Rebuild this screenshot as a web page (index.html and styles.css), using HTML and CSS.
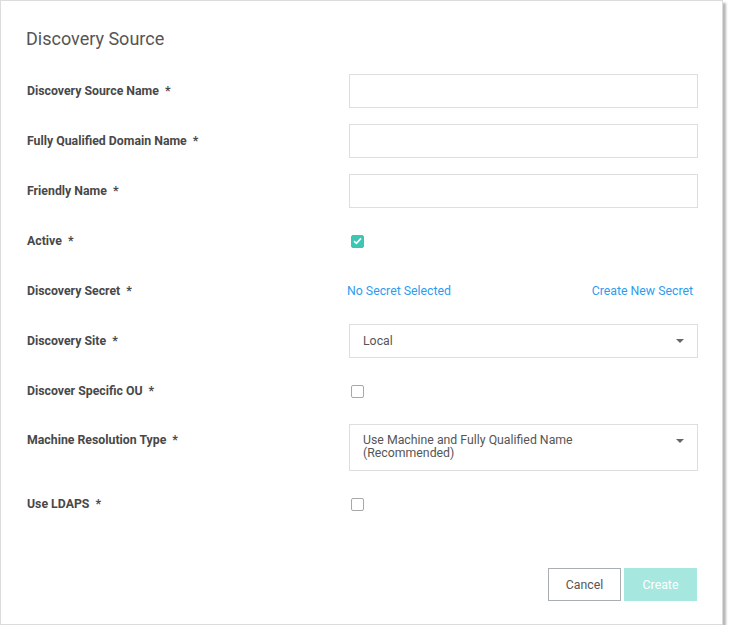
FILE: index.html
```html
<!DOCTYPE html>
<html>
<head>
<meta charset="utf-8">
<link rel="stylesheet" href="styles.css">
</head>
<body>
<div class="dialog">
  <h1 class="title">Discovery Source</h1>
  <div class="form">
    <div class="row">
      <label class="label">Discovery Source Name <span class="req">*</span></label>
      <div class="control"><div class="input"></div></div>
    </div>
    <div class="row">
      <label class="label">Fully Qualified Domain Name <span class="req">*</span></label>
      <div class="control"><div class="input"></div></div>
    </div>
    <div class="row">
      <label class="label">Friendly Name <span class="req">*</span></label>
      <div class="control"><div class="input"></div></div>
    </div>
    <div class="row">
      <label class="label">Active <span class="req">*</span></label>
      <div class="control">
        <span class="checkbox checked">
          <svg width="9" height="8" viewBox="0 0 9 8"><path d="M1 4.2 L3.4 6.4 L8 1.4" fill="none" stroke="#fff" stroke-width="1.6"/></svg>
        </span>
      </div>
    </div>
    <div class="row">
      <label class="label">Discovery Secret <span class="req">*</span></label>
      <div class="control links">
        <a class="link">No Secret Selected</a>
        <a class="link">Create New Secret</a>
      </div>
    </div>
    <div class="row">
      <label class="label">Discovery Site <span class="req">*</span></label>
      <div class="control"><div class="select"><span class="select-text">Local</span><span class="caret"></span></div></div>
    </div>
    <div class="row">
      <label class="label">Discover Specific OU <span class="req">*</span></label>
      <div class="control"><span class="checkbox"></span></div>
    </div>
    <div class="row row-top">
      <label class="label">Machine Resolution Type <span class="req">*</span></label>
      <div class="control"><div class="select tall"><span class="select-text">Use Machine and Fully Qualified Name<br>(Recommended)</span><span class="caret"></span></div></div>
    </div>
    <div class="row">
      <label class="label">Use LDAPS <span class="req">*</span></label>
      <div class="control"><span class="checkbox"></span></div>
    </div>
  </div>
  <div class="actions">
    <button class="btn btn-cancel">Cancel</button>
    <button class="btn btn-create">Create</button>
  </div>
</div>
</body>
</html>
```
FILE: styles.css
```css
html, body {
  margin: 0;
  padding: 0;
  background: #fff;
}
body {
  font-family: Roboto, "Liberation Sans", Arial, sans-serif;
}
.dialog {
  box-sizing: border-box;
  width: 723px;
  height: 625px;
  border: 1px solid #dcdcdc;
  box-shadow: 3px 3px 2px rgba(0,0,0,0.28);
  background: #fff;
  padding: 27px 25px 0 25px;
  display: flex;
  flex-direction: column;
}
.title {
  margin: 0;
  font-size: 18px;
  font-weight: 400;
  line-height: 21px;
  color: #555;
}
.form {
  margin-top: 25px;
  display: flex;
  flex-direction: column;
  gap: 16px;
}
.row {
  display: grid;
  grid-template-columns: 323px 349px;
  align-items: center;
  min-height: 34px;
}
.row-top {
  align-items: start;
}
.row-top .label {
  padding-top: 9px;
}
.label {
  font-size: 12.3px;
  font-weight: 700;
  color: #484848;
  padding-left: 1px;
}
.req {
  margin-left: 3px;
}
.control {
  display: flex;
  align-items: center;
}
.input {
  box-sizing: border-box;
  width: 349px;
  height: 34px;
  border: 1px solid #dedede;
}
.checkbox {
  box-sizing: border-box;
  width: 13px;
  height: 13px;
  margin-left: 2px;
  border: 1px solid #a8a8a8;
  border-radius: 2px;
  display: flex;
  align-items: center;
  justify-content: center;
}
.checkbox.checked {
  background: #3cc7b4;
  border-color: #3cc7b4;
}
.links {
  justify-content: space-between;
  padding-right: 5px;
  margin-left: -2px;
}
.link {
  font-size: 12.3px;
  color: #2d9cf0;
}
.select {
  box-sizing: border-box;
  width: 349px;
  height: 34px;
  border: 1px solid #dedede;
  display: flex;
  align-items: center;
  justify-content: space-between;
  padding: 0 13px 0 13px;
  color: #555;
  font-size: 12.3px;
}
.select.tall {
  height: 47px;
  align-items: flex-start;
  padding-top: 9px;
}
.select-text {
  line-height: 12px;
}
.select.tall .select-text {
  line-height: 12.5px;
}
.select.tall .caret {
  margin-top: 5px;
}
.caret {
  width: 0;
  height: 0;
  border-left: 4px solid transparent;
  border-right: 4px solid transparent;
  border-top: 4px solid #666;
}
.actions {
  margin-top: auto;
  margin-bottom: 23px;
  display: flex;
  justify-content: flex-end;
  gap: 3px;
}
.btn {
  box-sizing: border-box;
  width: 73px;
  height: 33px;
  font-family: Roboto, "Liberation Sans", Arial, sans-serif;
  font-size: 12.3px;
  padding: 0;
}
.btn-cancel {
  background: #fff;
  border: 1px solid #a9aeb3;
  color: #555;
}
.btn-create {
  background: #a6e8df;
  border: 1px solid #a6e8df;
  color: #fff;
}
```
